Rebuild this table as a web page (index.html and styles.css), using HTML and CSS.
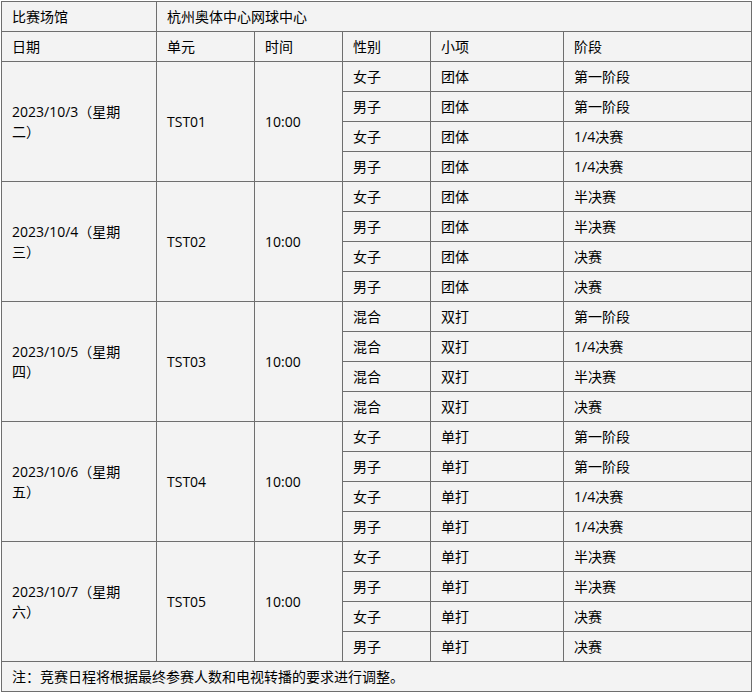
FILE: index.html
```html
<!DOCTYPE html>
<html lang="zh">
<head>
<meta charset="utf-8">
<title>赛程</title>
<link rel="stylesheet" href="styles.css">
</head>
<body>
<table class="sched">
<colgroup>
<col class="c1"><col class="c2"><col class="c3"><col class="c4"><col class="c5"><col class="c6">
</colgroup>
<tbody>
<tr><td>比赛场馆</td><td colspan="5">杭州奥体中心网球中心</td></tr>
<tr><td>日期</td><td>单元</td><td>时间</td><td>性别</td><td>小项</td><td>阶段</td></tr>

<tr><td rowspan="4" class="date">2023/10/3（星期二）</td><td rowspan="4">TST01</td><td rowspan="4">10:00</td><td>女子</td><td>团体</td><td>第一阶段</td></tr>
<tr><td>男子</td><td>团体</td><td>第一阶段</td></tr>
<tr><td>女子</td><td>团体</td><td>1/4决赛</td></tr>
<tr><td>男子</td><td>团体</td><td>1/4决赛</td></tr>

<tr><td rowspan="4" class="date">2023/10/4（星期三）</td><td rowspan="4">TST02</td><td rowspan="4">10:00</td><td>女子</td><td>团体</td><td>半决赛</td></tr>
<tr><td>男子</td><td>团体</td><td>半决赛</td></tr>
<tr><td>女子</td><td>团体</td><td>决赛</td></tr>
<tr><td>男子</td><td>团体</td><td>决赛</td></tr>

<tr><td rowspan="4" class="date">2023/10/5（星期四）</td><td rowspan="4">TST03</td><td rowspan="4">10:00</td><td>混合</td><td>双打</td><td>第一阶段</td></tr>
<tr><td>混合</td><td>双打</td><td>1/4决赛</td></tr>
<tr><td>混合</td><td>双打</td><td>半决赛</td></tr>
<tr><td>混合</td><td>双打</td><td>决赛</td></tr>

<tr><td rowspan="4" class="date">2023/10/6（星期五）</td><td rowspan="4">TST04</td><td rowspan="4">10:00</td><td>女子</td><td>单打</td><td>第一阶段</td></tr>
<tr><td>男子</td><td>单打</td><td>第一阶段</td></tr>
<tr><td>女子</td><td>单打</td><td>1/4决赛</td></tr>
<tr><td>男子</td><td>单打</td><td>1/4决赛</td></tr>

<tr><td rowspan="4" class="date">2023/10/7（星期六）</td><td rowspan="4">TST05</td><td rowspan="4">10:00</td><td>女子</td><td>单打</td><td>半决赛</td></tr>
<tr><td>男子</td><td>单打</td><td>半决赛</td></tr>
<tr><td>女子</td><td>单打</td><td>决赛</td></tr>
<tr><td>男子</td><td>单打</td><td>决赛</td></tr>

<tr><td colspan="6">注：竞赛日程将根据最终参赛人数和电视转播的要求进行调整。</td></tr>
</tbody>
</table>
</body>
</html>
```
FILE: styles.css
```css
html, body {
  margin: 0;
  padding: 0;
  background: #ffffff;
}
body {
  padding: 1px 0 0 1px;
}
.sched {
  border-collapse: collapse;
  table-layout: fixed;
  width: 750px;
  background: #f3f3f3;
  font-family: "Open Sans", "Noto Sans CJK SC", sans-serif;
  font-size: 14px;
  line-height: 20px;
  color: #000000;
}
.sched td {
  border: 1px solid #6e6e6e;
  height: 30px;
  padding: 0 10px;
  box-sizing: border-box;
  vertical-align: middle;
  text-align: left;
  white-space: normal;
}
.sched td.date {
  padding-right: 31px;
}
.c1 { width: 155px; }
.c2 { width: 98px; }
.c3 { width: 88px; }
.c4 { width: 88px; }
.c5 { width: 133px; }
.c6 { width: 188px; }
```
